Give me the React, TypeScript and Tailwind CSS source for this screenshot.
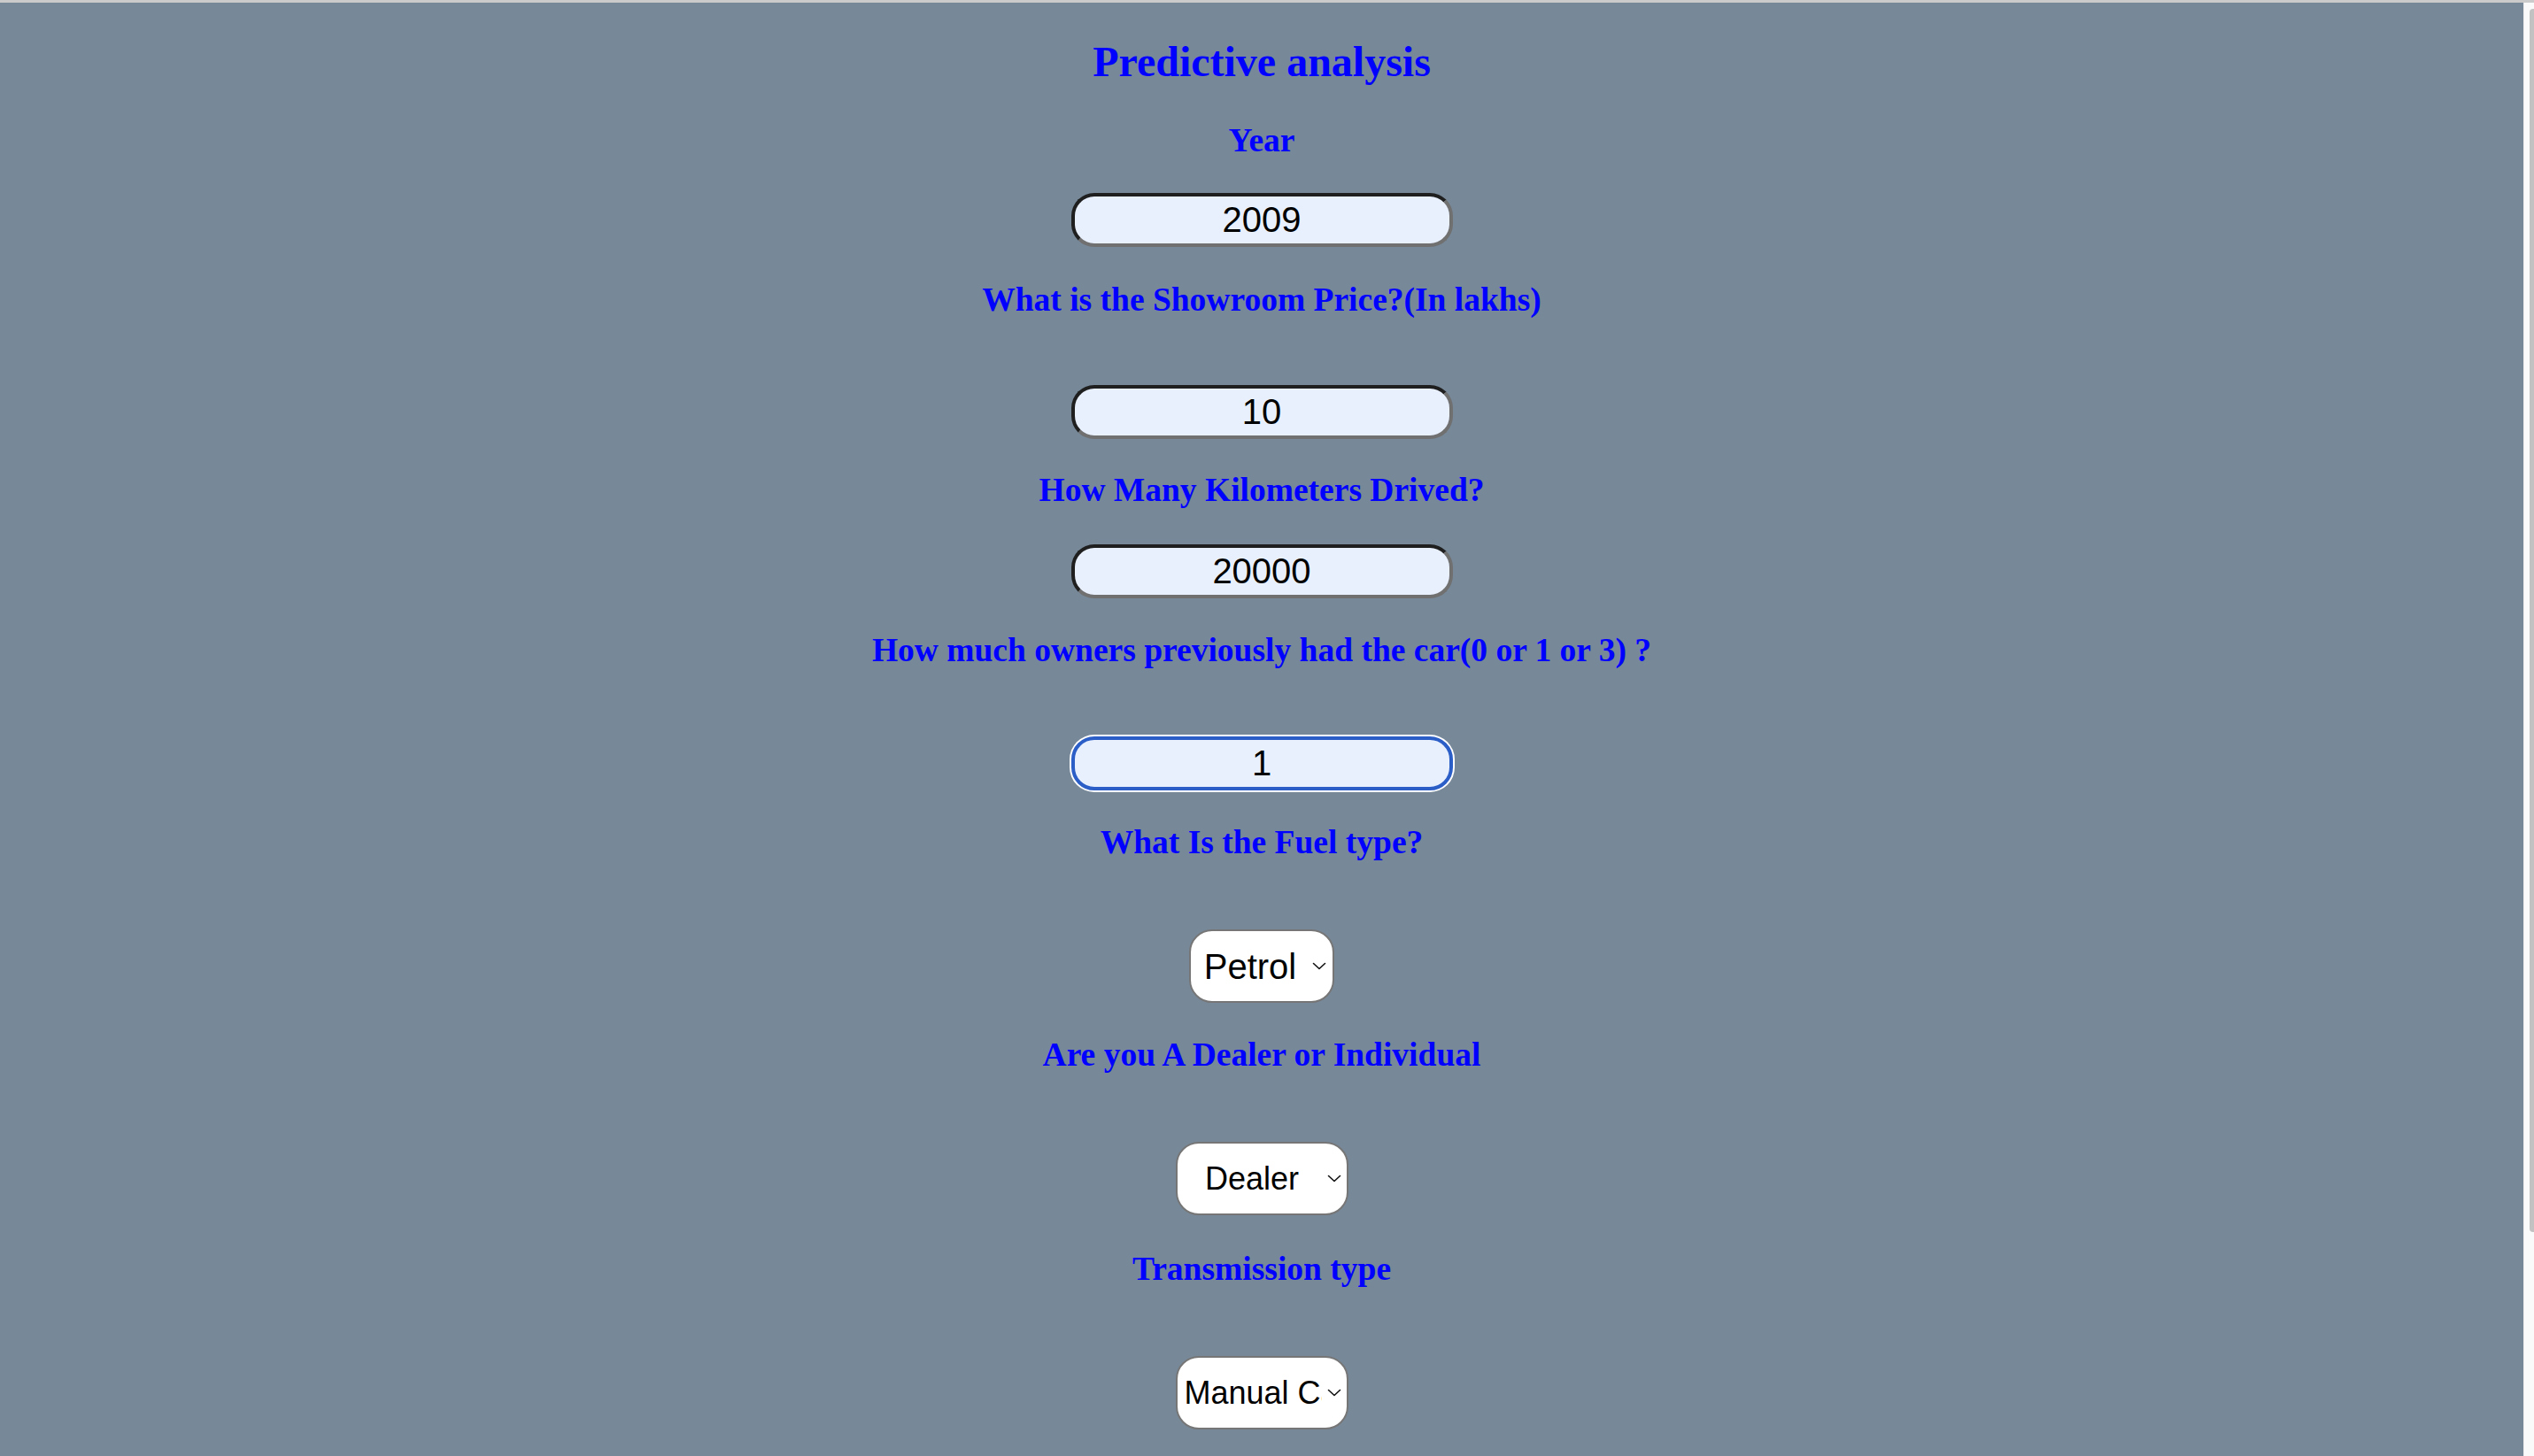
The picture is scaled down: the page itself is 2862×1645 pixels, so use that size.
import React from 'react';

const serif = "font-['Liberation_Serif','Times_New_Roman',serif]";
const sans = "font-['Liberation_Sans',Arial,sans-serif]";

function Label({ text, className = '' }: { text: string; className?: string }) {
  return (
    <h3 className={`${serif} text-[37.5px] font-bold leading-[42px] text-[#0000ff] ${className}`}>
      {text}
    </h3>
  );
}

function Field({ value, focused = false, className = '' }: { value: string; focused?: boolean; className?: string }) {
  const border = focused
    ? 'border-[#2b5ec6] shadow-[0_0_0_2px_#ffffff]'
    : 'border-t-[#1f1f1f] border-l-[#1f1f1f] border-b-[#707070] border-r-[#707070]';
  return (
    <input
      readOnly
      value={value}
      className={`${sans} h-[61px] w-[431px] rounded-[26px] border-[4px] border-solid bg-[#e8f0fe] p-0 text-center text-[40px] text-black outline-none ${border} ${className}`}
    />
  );
}

function Chevron() {
  return (
    <svg width="16" height="9" viewBox="0 0 16 9" fill="none" className="shrink-0">
      <path d="M1.5 1.5 L8 7.5 L14.5 1.5" stroke="#111" strokeWidth="1.6" strokeLinecap="round" strokeLinejoin="round" />
    </svg>
  );
}

function Dropdown({
  value,
  width,
  size,
  align,
  pl,
  pr,
  className = '',
}: {
  value: string;
  width: string;
  size: string;
  align: string;
  pl: string;
  pr: string;
  className?: string;
}) {
  return (
    <div
      className={`${sans} flex h-[83px] items-center rounded-[26px] border-2 border-[#767676] bg-white ${width} ${pl} ${pr} ${className}`}
    >
      <span className={`flex-1 overflow-hidden whitespace-nowrap text-black ${size} ${align}`}>{value}</span>
      <span className="ml-[6px] flex">
        <Chevron />
      </span>
    </div>
  );
}

export default function App() {
  return (
    <div className="flex h-screen w-full overflow-hidden border-t-[3px] border-[#cbcbcb]">
      <main className="flex flex-1 flex-col items-center bg-[#778899] text-center">
        <h2 className={`${serif} mt-[39px] text-[48px] font-bold leading-[55px] text-[#0000ff]`}>
          Predictive analysis
        </h2>

        <Label text="Year" className="mt-[41px]" />
        <Field value="2009" className="mt-[38px]" />

        <Label text="What is the Showroom Price?(In lakhs)" className="mt-[39px]" />
        <Field value="10" className="mt-[75px]" />

        <Label text="How Many Kilometers Drived?" className="mt-[37px]" />
        <Field value="20000" className="mt-[40px]" />

        <Label text="How much owners previously had the car(0 or 1 or 3) ?" className="mt-[38px]" />
        <Field value="1" focused className="mt-[76px]" />

        <Label text="What Is the Fuel type?" className="mt-[38px]" />
        <Dropdown
          value="Petrol"
          width="w-[164px]"
          size="text-[40px]"
          align="text-center"
          pl="pl-[3px]"
          pr="pr-[7px]"
          className="mt-[77px]"
        />

        <Label text="Are you A Dealer or Individual" className="mt-[38px]" />
        <Dropdown
          value="Dealer"
          width="w-[195px]"
          size="text-[36px]"
          align="text-center"
          pl="pl-[6px]"
          pr="pr-[6px]"
          className="mt-[77px]"
        />

        <Label text="Transmission type" className="mt-[40px]" />
        <Dropdown
          value="Manual Car"
          width="w-[195px]"
          size="text-[36px]"
          align="text-left"
          pl="pl-[8px]"
          pr="pr-[6px]"
          className="mt-[77px]"
        />
      </main>

      {/* scrollbar */}
      <div className="flex w-[12px] flex-col border-l border-[#ececec] bg-[#fafafa]">
        <div className="ml-[6px] mt-[7px] h-[1382px] rounded-l-[4px] bg-[#c2c2c2]" />
      </div>
    </div>
  );
}
